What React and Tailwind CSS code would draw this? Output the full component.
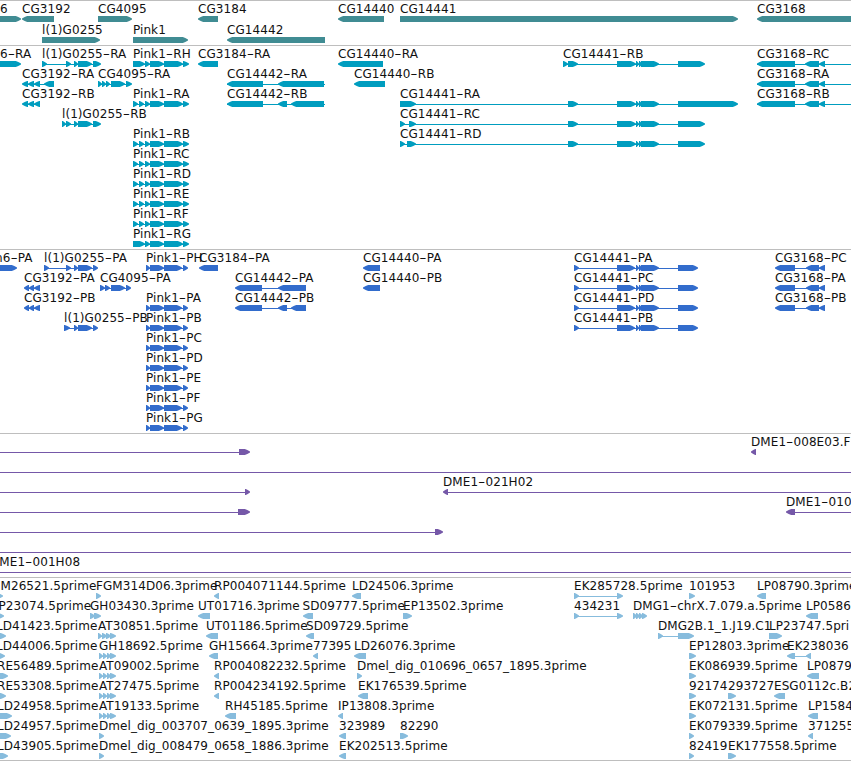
import { Fragment } from "react";

const WIDTH = 851;

// feature: [label, label x, strand, exons, line start, line end]
const PINK_R = [[133, 138], [139, 144], [145, 150], [150, 164], [164, 183], [183, 189]];
const PINK_R_LONG = [[133, 145], [145, 150], [150, 164], [164, 183], [183, 189]];
const PINK_P = [[146, 150], [150, 164], [164, 182], [183, 188]];
const CG14441_TAIL = [[568, 578], [617, 636], [636, 639], [639, 642], [641, 659]];
const CG14441_P = [[574, 579], [617, 635], [636, 639], [639, 642], [641, 659], [678, 698]];
const CG3168_R = [[757, 795], [805, 819], [819, 825]];
const CG3168_P = [[775, 795], [806, 819], [819, 825]];
const AT_EXONS = [[99, 103], [103, 107], [107, 111], [110, 116]];

const genes = [
  [
    ["6", 0, "+", [[-20, 21]]],
    ["CG3192", 22, "-", [[22, 54]]],
    ["CG4095", 98, "+", [[98, 132]]],
    ["CG3184", 198, "-", [[198, 218]]],
    ["CG14440", 338, "-", [[338, 384]]],
    ["CG14441", 400, "+", [[400, 738]]],
    ["CG3168", 757, "-", [[757, 900]]],
  ],
  [
    ["l(1)G0255", 42, "+", [[42, 100]]],
    ["Pink1", 133, "+", [[133, 188]]],
    ["CG14442", 227, "-", [[227, 325]]],
  ],
];

const transcripts = [
  [
    ["6-RA", 0, "+", [[-20, 21]]],
    ["l(1)G0255-RA", 42, "+", [[42, 47], [66, 71], [74, 78], [78, 92], [93, 101]]],
    ["Pink1-RH", 133, "+", PINK_R_LONG],
    ["CG3184-RA", 198, "-", [[198, 218]]],
    ["CG14440-RA", 338, "-", [[338, 383]]],
    ["CG14441-RB", 563, "+", [[563, 568], ...CG14441_TAIL, [678, 705]]],
    ["CG3168-RC", 757, "-", CG3168_R, 757, 851],
  ],
  [
    ["CG3192-RA", 22, "-", [[22, 28], [28, 34], [34, 40], [44, 54]]],
    ["CG4095-RA", 98, "+", [[98, 102], [102, 106], [106, 110], [111, 125], [126, 132]]],
    ["CG14442-RA", 227, "-", [[227, 263], [278, 324]], 227, 325],
    ["CG14440-RB", 354, "-", [[354, 385]]],
    ["CG3168-RA", 757, "-", CG3168_R, 757, 851],
  ],
  [
    ["CG3192-RB", 22, "-", [[22, 28], [28, 34], [34, 40]]],
    ["Pink1-RA", 133, "+", PINK_R],
    ["CG14442-RB", 227, "-", [[227, 263], [278, 287], [291, 324]], 227, 325],
    ["CG14441-RA", 400, "+", [[400, 416], ...CG14441_TAIL, [678, 738]]],
    ["CG3168-RB", 757, "-", CG3168_R, 757, 851],
  ],
  [
    ["l(1)G0255-RB", 62, "+", [[62, 66], [66, 71], [74, 78], [78, 92], [93, 101]]],
    ["CG14441-RC", 400, "+", [[400, 405], [409, 416], ...CG14441_TAIL, [678, 705]]],
  ],
  [
    ["Pink1-RB", 133, "+", PINK_R],
    ["CG14441-RD", 400, "+", [[400, 405], [407, 416], ...CG14441_TAIL, [678, 705]]],
  ],
  [["Pink1-RC", 133, "+", PINK_R]],
  [["Pink1-RD", 133, "+", PINK_R]],
  [["Pink1-RE", 133, "+", PINK_R]],
  [["Pink1-RF", 133, "+", PINK_R]],
  [["Pink1-RG", 133, "+", PINK_R_LONG]],
];

const proteins = [
  [
    ["n6-PA", -5, "+", [[-20, 17]]],
    ["l(1)G0255-PA", 44, "+", [[44, 49], [66, 71], [74, 78], [78, 92], [93, 98]]],
    ["Pink1-PH", 146, "+", PINK_P],
    ["CG3184-PA", 199, "-", [[199, 218]]],
    ["CG14440-PA", 363, "-", [[363, 380]]],
    ["CG14441-PA", 574, "+", CG14441_P],
    ["CG3168-PC", 775, "-", CG3168_P],
  ],
  [
    ["CG3192-PA", 24, "-", [[24, 29], [29, 34], [34, 40]]],
    ["CG4095-PA", 100, "+", [[100, 105], [105, 110], [111, 125], [126, 131]]],
    ["CG14442-PA", 235, "-", [[235, 262], [278, 306]]],
    ["CG14440-PB", 363, "-", [[363, 380]]],
    ["CG14441-PC", 574, "+", CG14441_P],
    ["CG3168-PA", 775, "-", CG3168_P],
  ],
  [
    ["CG3192-PB", 24, "-", [[24, 29], [29, 34], [34, 40]]],
    ["Pink1-PA", 146, "+", PINK_P],
    ["CG14442-PB", 235, "-", [[235, 262], [278, 287], [291, 306]]],
    ["CG14441-PD", 574, "+", CG14441_P],
    ["CG3168-PB", 775, "-", CG3168_P],
  ],
  [
    ["l(1)G0255-PB", 64, "+", [[64, 70], [74, 78], [78, 92], [93, 98]]],
    ["Pink1-PB", 146, "+", PINK_P],
    ["CG14441-PB", 574, "+", CG14441_P],
  ],
  [["Pink1-PC", 146, "+", PINK_P]],
  [["Pink1-PD", 146, "+", PINK_P]],
  [["Pink1-PE", 146, "+", PINK_P]],
  [["Pink1-PF", 146, "+", PINK_P]],
  [["Pink1-PG", 146, "+", PINK_P]],
];

const clones = [
  [
    ["", 0, "+", [[239, 250]], 0, 245],
    ["DME1-008E03.F", 751, "-", [[751, 756]]],
  ],
  [["", 0, "+", [], 0, 851]],
  [
    ["", 0, "+", [[245, 250]], 0, 248],
    ["DME1-021H02", 443, "-", [[443, 448]], 446, 851],
  ],
  [
    ["", 0, "+", [[238, 250]], 0, 245],
    ["DME1-010", 786, "-", [[786, 795]], 790, 851],
  ],
  [["", 0, "+", [[435, 443]], 0, 440]],
  [["", 0, "+", [], 0, 851]],
  [["DME1-001H08", -10, "+", [], 0, 851]],
];

const ests = [
  [
    ["M26521.5prime", 0.5, "+", [[-3, 3]]],
    ["FGM314D06.3prime", 96, "+", [[96, 101]]],
    ["RP004071144.5prime", 214, "-", [[214, 219]]],
    ["LD24506.3prime", 352, "-", [[352, 361]]],
    ["EK285728.5prime", 574, "+", [[574, 579], [617, 623]]],
    ["101953", 689, "+", [[689, 695]]],
    ["LP08790.3prime", 757, "-", [[757, 766]]],
  ],
  [
    ["P23074.5prime", -1.5, "+", [[-3, 4]]],
    ["GH03430.3prime", 90, "+", [[90, 95], [94, 101]]],
    ["UT01716.3prime", 198, "-", [[198, 210]]],
    ["SD09777.5prime", 302.5, "-", [[303, 313]]],
    ["EP13502.3prime", 403, "+", [[403, 412]]],
    ["434231", 574, "+", [[574, 579], [617, 623]]],
    ["DMG1-chrX.7.079.a.5prime", 633, "+", [[633, 637], [636, 640], [639, 643], [642, 647]]],
    ["LP0586", 806, "-", [[806, 818]]],
  ],
  [
    ["LD41423.5prime", -4, "+", [[-3, 6]]],
    ["AT30851.5prime", 98, "+", [[98, 102], [102, 107], [106, 111], [110, 116]]],
    ["UT01186.5prime", 206, "-", [[206, 218]]],
    ["SD09729.5prime", 306, "-", [[306, 314]]],
    ["DMG2B.1_1.J19.C1", 658, "+", [[658, 663], [678, 694]]],
    ["LP23747.5pri", 769, "+", [[769, 782]]],
  ],
  [
    ["LD44006.5prime", -4, "+", [[-3, 5]]],
    ["GH18692.5prime", 99, "+", AT_EXONS],
    ["GH15664.3prime", 209, "-", [[209, 218]]],
    ["77395", 313, "-", [[313, 318]]],
    ["LD26076.3prime", 354, "-", [[354, 366]]],
    ["EP12803.3prime", 689, "+", [[689, 696]]],
    ["EK238036", 787, "-", [[787, 795], [806, 811]]],
  ],
  [
    ["RE56489.5prime", -3, "+", [[-3, 8]]],
    ["AT09002.5prime", 99, "+", AT_EXONS],
    ["RP004082232.5prime", 214, "-", [[214, 219]]],
    ["Dmel_dig_010696_0657_1895.3prime", 357, "+", [[357, 362]]],
    ["EK086939.5prime", 689, "+", [[689, 696]]],
    ["LP0879", 807, "-", [[807, 819]]],
  ],
  [
    ["RE53308.5prime", -3, "+", [[-3, 6]]],
    ["AT27475.5prime", 99, "+", AT_EXONS],
    ["RP004234192.5prime", 214, "-", [[214, 219]]],
    ["EK176539.5prime", 358, "-", [[358, 368]]],
    ["92174", 689, "+", [[689, 696]]],
    ["293727", 728, "+", [[728, 736]]],
    ["ESG0112c.B2", 774, "-", [[774, 785]]],
  ],
  [
    ["LD24958.5prime", -3, "+", [[-3, 12]]],
    ["AT19133.5prime", 99, "+", AT_EXONS],
    ["RH45185.5prime", 225, "-", [[225, 236]]],
    ["IP13808.3prime", 338, "-", [[338, 343]]],
    ["EK072131.5prime", 689, "+", [[689, 696]]],
    ["LP1584", 808, "-", [[808, 818]]],
  ],
  [
    ["LD24957.5prime", -3, "+", [[-3, 11]]],
    ["Dmel_dig_003707_0639_1895.3prime", 99, "+", [[99, 104]]],
    ["323989", 339, "-", [[339, 346]]],
    ["82290", 400, "+", [[400, 408]]],
    ["EK079339.5prime", 689, "+", [[689, 694]]],
    ["371255", 808, "-", [[808, 813]]],
  ],
  [
    ["LD43905.5prime", -3, "+", [[-3, 8]]],
    ["Dmel_dig_008479_0658_1886.3prime", 99, "+", [[99, 104]]],
    ["EK202513.5prime", 339, "-", [[339, 346]]],
    ["82419", 689, "+", [[689, 694]]],
    ["EK177558.5prime", 728, "+", [[728, 736]]],
  ],
];

// block with a tapered head on the side the strand points to
function exonPoints(x1, x2, y, strand) {
  const head = Math.min(6, x2 - x1);
  const tip = strand === "+" ? x2 : x1;
  const tail = strand === "+" ? x1 : x2;
  const dir = strand === "+" ? 1 : -1;
  const neck = tip - dir * head;
  const mid = neck + dir * head * 0.55;
  return [
    [tail, y],
    [neck + dir * 0.8, y],
    [mid, y + 1],
    [tip, y + 2.4],
    [tip, y + 3.6],
    [mid, y + 5],
    [neck + dir * 0.8, y + 6],
    [tail, y + 6],
  ].join(" ");
}

// the hyphen is stretched to a wide dash
function Label({ text, x, y }) {
  return (
    <text x={x} y={y} className="fill-[#111]">
      {text.split("-").map((part, i) => (
        <Fragment key={i}>
          {i > 0 && (
            <tspan textLength="7.4" lengthAdjust="spacingAndGlyphs">-</tspan>
          )}
          {part}
        </Fragment>
      ))}
    </text>
  );
}

function Feature({ feature, y }) {
  const [label, x, strand, exons] = feature;
  const start = feature[4] ?? exons[0][0] + 1;
  const end = feature[5] ?? exons[exons.length - 1][1] - 1;

  return (
    <g>
      <rect x={start} y={y + 3} width={end - start} height="1" />
      {exons.map(([x1, x2]) => (
        <polygon key={x1} points={exonPoints(x1, x2, y, strand)} />
      ))}
      {label && <Label text={label} x={x} y={y - 3} />}
    </g>
  );
}

function Track({ rows, height, pitch = 20, className }) {
  return (
    <section className="border-t border-[#bebebe]">
      <svg
        width={WIDTH}
        height={height}
        className={`block overflow-hidden font-['DejaVu_Sans',sans-serif] text-[12px] tracking-[0.07px] ${className}`}
      >
        {rows.map((row, r) => (
          <g key={r}>
            {row.map((feature, i) => (
              <Feature key={i} feature={feature} y={15 + r * pitch} />
            ))}
          </g>
        ))}
      </svg>
    </section>
  );
}

export default function App() {
  return (
    <main className="flex w-[851px] flex-col overflow-hidden border-b border-[#bebebe] bg-white">
      <Track rows={genes} height={44} pitch={21} className="fill-[#408c93]" />
      <Track rows={transcripts} height={203} className="fill-[#009dbf]" />
      <Track rows={proteins} height={183} className="fill-[#326ccc]" />
      <Track rows={clones} height={143} className="fill-[#7558a8]" />
      <Track rows={ests} height={182} className="fill-[#87bcdd]" />
    </main>
  );
}
